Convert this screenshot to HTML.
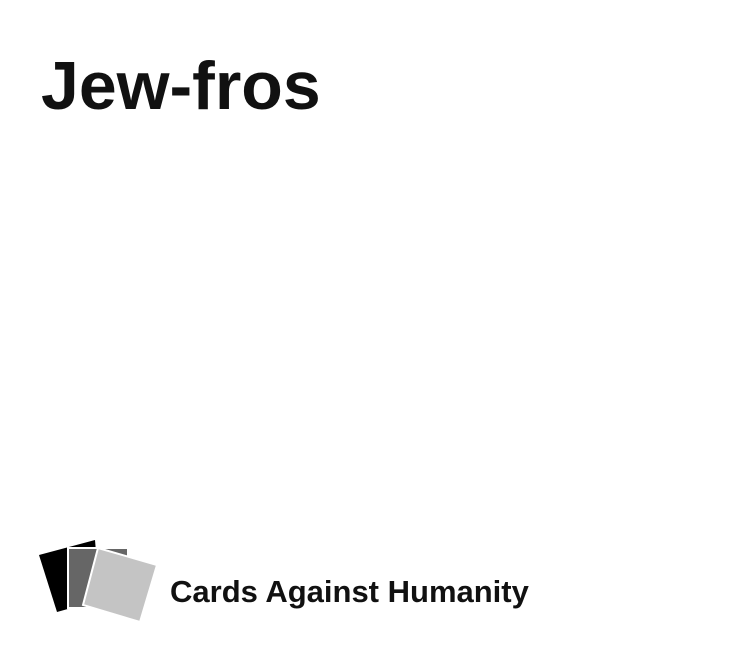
<!DOCTYPE html><html><head><style>
body{margin:0;width:750px;height:656px;background:#fff;position:relative;overflow:hidden;font-family:"Liberation Sans",sans-serif}
h1{position:absolute;left:41px;top:52px;margin:0;font-size:68px;font-weight:bold;color:#111;letter-spacing:0px;line-height:1}
.t{position:absolute;left:170px;top:574px;font-size:31px;font-weight:bold;color:#111;letter-spacing:0px}
</style></head><body>
<h1>Jew-fros</h1>
<svg style="position:absolute;left:0;top:0" width="750" height="656">
<polygon points="39,555 95,540 100,600 57,612" fill="#000"/>
<polygon points="68,548 128,548 128,608 68,608" fill="#666" stroke="#fff" stroke-width="2"/>
<polygon points="98,548 157,565 140,622 83,605" fill="#c4c4c4" stroke="#fff" stroke-width="2"/>
</svg>
<div class="t">Cards Against Humanity</div>
</body></html>
